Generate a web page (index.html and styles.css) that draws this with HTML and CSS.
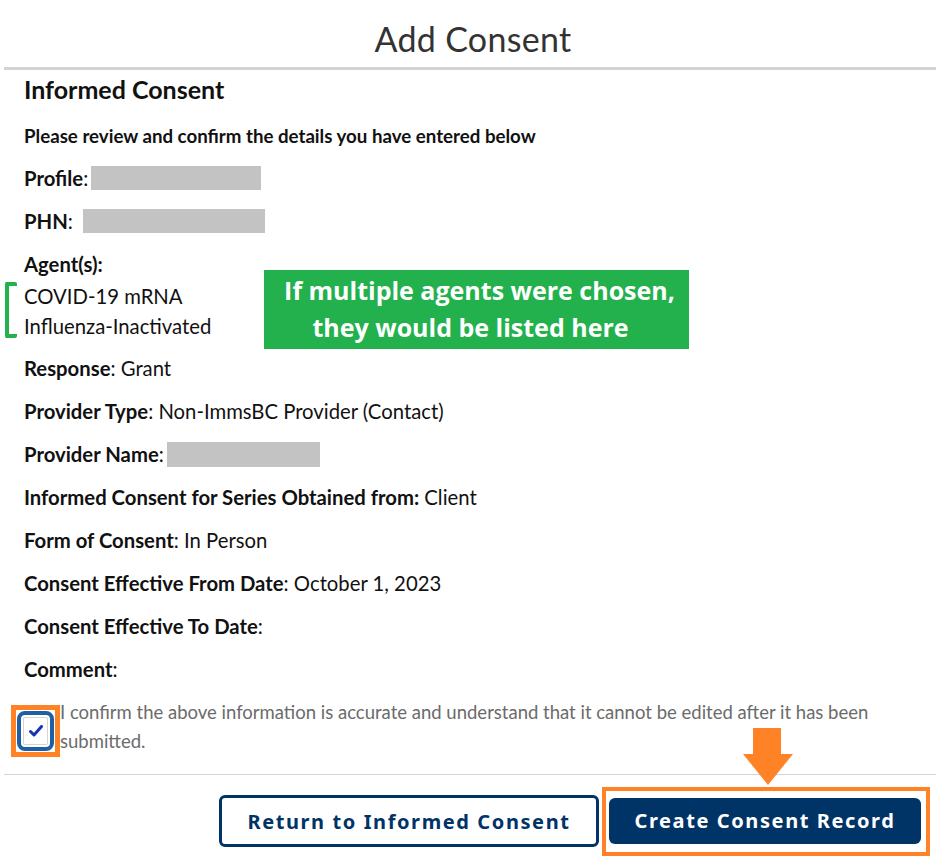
FILE: index.html
```html
<!DOCTYPE html>
<html lang="en">
<head>
  <meta charset="UTF-8">
  <meta name="viewport" content="width=device-width, initial-scale=1.0">
  <title>Add Consent</title>
  <link rel="stylesheet" href="styles.css">
</head>
<body>
  <div class="dialog">
    <header class="dialog-header">
      <h1>Add Consent</h1>
    </header>

    <section class="dialog-body">
      <h2>Informed Consent</h2>
      <p class="intro">Please review and confirm the details you have entered below</p>

      <div class="row"><b>Profile</b>:<span class="redacted profile"></span></div>
      <div class="row"><b>PHN</b>:<span class="redacted phn"></span></div>

      <div class="agents">
        <div class="row tight"><b>Agent(s):</b></div>
        <ul class="agent-list">
          <li>COVID-19 mRNA</li>
          <li>Influenza-Inactivated</li>
        </ul>
        <span class="bracket"></span>
        <div class="callout">
          <span class="line-one">If multiple agents were chosen,</span>
          <span class="line-two">they would be listed here</span>
        </div>
      </div>

      <div class="row"><b>Response</b>: Grant</div>
      <div class="row"><b>Provider Type</b>: Non-ImmsBC Provider (Contact)</div>
      <div class="row"><b>Provider Name</b>:<span class="redacted provider"></span></div>
      <div class="row"><b>Informed Consent for Series Obtained from:</b> Client</div>
      <div class="row"><b>Form of Consent</b>: In Person</div>
      <div class="row"><b>Consent Effective From Date</b>: October 1, 2023</div>
      <div class="row"><b>Consent Effective To Date</b>:</div>
      <div class="row"><b>Comment</b>:</div>

      <label class="confirm">
        <span class="highlight">
          <span class="checkbox">
            <svg width="14" height="12" viewBox="0 0 14 12">
              <path d="M1.5 6.5 L5 10 L12.5 1.5" fill="none" stroke="#1733b8" stroke-width="3" stroke-linecap="round" stroke-linejoin="round"/>
            </svg>
          </span>
        </span>
        <span class="confirm-text">I confirm the above information is accurate and understand that it cannot be edited after it has been submitted.</span>
      </label>
    </section>

    <footer class="dialog-footer">
      <button class="btn btn-outline">Return to Informed Consent</button>
      <span class="highlight-box">
        <button class="btn btn-primary">Create Consent Record</button>
      </span>
      <svg class="arrow" width="52" height="58" viewBox="0 0 52 58">
        <path d="M11 0 H39 V26 H51 L26 57 L1 26 H11 Z" fill="#ff8326"/>
      </svg>
    </footer>
  </div>
</body>
</html>
```

FILE: styles.css
```css
:root {
  --navy: #003366;
  --orange: #ff8326;
  --green: #22b14c;
  --redacted: #c3c3c3;
  --text: #111;
}

* {
  box-sizing: border-box;
  margin: 0;
  padding: 0;
}

body {
  font-family: 'Lato', 'Liberation Sans', sans-serif;
  color: var(--text);
  background: #fff;
}

.dialog {
  margin-left: 4px;
}

.dialog-header {
  height: 70px;
  border-bottom: 3px solid #d3d3d3;
  text-align: center;
  padding-top: 19px;
}

.dialog-header h1 {
  font-size: 34px;
  font-weight: 400;
  line-height: 40px;
  color: #333;
  letter-spacing: 0.3px;
  padding-left: 6px;
}

.dialog-body {
  padding: 4px 0 0 20px;
}

.dialog-body h2 {
  font-size: 25px;
  font-weight: 700;
  line-height: 30px;
  margin-bottom: 18.5px;
}

.intro {
  font-size: 18.7px;
  font-weight: 700;
  line-height: 27px;
  margin-bottom: 15px;
}

.row {
  font-size: 20.3px;
  line-height: 27px;
  margin-bottom: 16px;
}

.row b {
  font-weight: 700;
}

.row.tight {
  margin-bottom: 3px;
}

.redacted {
  display: inline-block;
  height: 24px;
  background: var(--redacted);
  vertical-align: middle;
  margin-top: -4px;
}

.redacted.profile { width: 170px; margin-left: 3px; }
.redacted.phn { width: 182px; margin-left: 10px; }
.redacted.provider { width: 153px; margin-left: 3px; height: 25px; }

.agents {
  position: relative;
  margin-top: 1px;
  margin-bottom: 14px;
}

.agent-list {
  list-style: none;
  font-size: 20.3px;
  line-height: 30px;
}

.bracket {
  position: absolute;
  left: -19px;
  top: 31px;
  width: 12px;
  height: 56px;
  border: 4px solid var(--green);
  border-right: none;
  border-radius: 2px;
}

.callout {
  position: absolute;
  left: 240px;
  top: 19px;
  width: 425px;
  height: 79px;
  background: var(--green);
  color: #fff;
  font-family: 'Open Sans', 'Liberation Sans', sans-serif;
  font-weight: 700;
  font-size: 25px;
  line-height: 37px;
  text-align: center;
  padding-top: 2px;
}

.callout span {
  display: block;
}

.callout .line-one {
  padding-left: 6px;
}

.callout .line-two {
  padding-right: 12px;
}

.confirm {
  display: flex;
  align-items: flex-start;
  margin-left: -13px;
  margin-top: 22px;
}

.highlight {
  flex: none;
  width: 49px;
  height: 52px;
  border: 5px solid var(--orange);
  padding: 1px 0 0 1px;
}

.checkbox {
  display: flex;
  align-items: center;
  justify-content: center;
  width: 37px;
  height: 40px;
  border: 4px solid #1f5fa3;
  border-radius: 8px;
  background: #fff;
  box-shadow: inset 0 0 0 2px #fff, inset 0 0 0 3px #d4d4d4;
}

.confirm-text {
  font-size: 18.5px;
  line-height: 29px;
  color: #6b6b6b;
  margin-top: -6.5px;
  max-width: 820px;
}

.dialog-footer {
  position: relative;
  margin-top: 17px;
  border-top: 1px solid #d6d6d6;
  display: flex;
  justify-content: flex-end;
  align-items: center;
  gap: 3px;
  padding: 12px 6px 0 0;
}

.btn {
  font-family: 'Noto Sans', 'Open Sans', sans-serif;
  font-weight: 700;
  font-size: 20px;
  letter-spacing: 1.6px;
  border-radius: 6px;
  cursor: pointer;
}

.btn-outline {
  width: 380px;
  height: 52px;
  background: #fff;
  color: var(--navy);
  border: 3px solid var(--navy);
}

.highlight-box {
  display: block;
  border: 4px solid var(--orange);
  padding: 7px 5px 8px 3px;
}

.btn-primary {
  display: block;
  width: 312px;
  height: 46px;
  background: var(--navy);
  color: #fff;
  border: none;
}

.arrow {
  position: absolute;
  left: 738px;
  top: -47px;
}
```
